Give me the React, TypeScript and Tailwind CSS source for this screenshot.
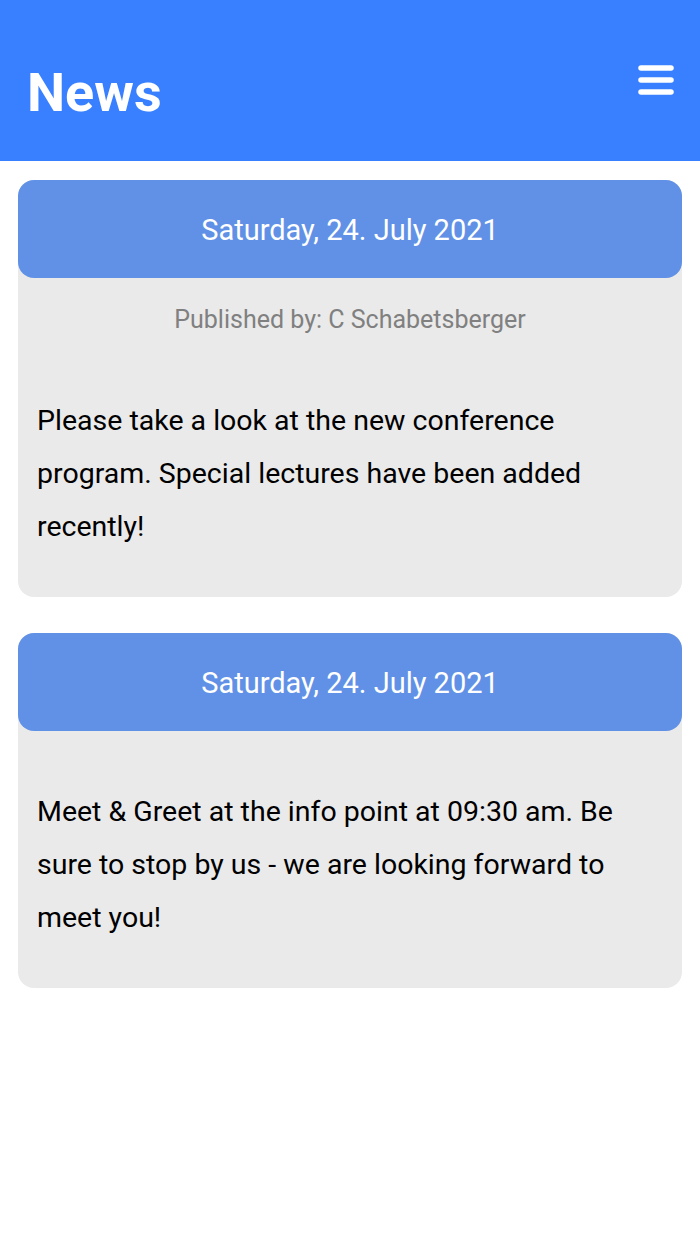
import React from 'react';

type NewsItem = { date: string; author?: string; text: string };

const items: NewsItem[] = [
  {
    date: 'Saturday, 24. July 2021',
    author: 'C Schabetsberger',
    text: 'Please take a look at the new conference program. Special lectures have been added recently!',
  },
  {
    date: 'Saturday, 24. July 2021',
    text: 'Meet & Greet at the info point at 09:30 am. Be sure to stop by us - we are looking forward to meet you!',
  },
];

function MenuIcon() {
  return (
    <svg width="36" height="32" viewBox="0 0 36 32" fill="none">
      <line x1="3" y1="4" x2="33" y2="4" stroke="white" strokeWidth="5.5" strokeLinecap="round" />
      <line x1="3" y1="16" x2="33" y2="16" stroke="white" strokeWidth="5.5" strokeLinecap="round" />
      <line x1="3" y1="28" x2="33" y2="28" stroke="white" strokeWidth="5.5" strokeLinecap="round" />
    </svg>
  );
}

export default function App() {
  return (
    <div className="min-h-[1244px] bg-white font-['Roboto',sans-serif]">
      <header className="h-[161px] bg-[#3880ff] flex items-start justify-between pl-[27px] pr-[27px]">
        <h1 className="mt-[60px] text-[54px] leading-[66px] font-bold text-white">News</h1>
        <button className="mt-[64px] -mr-[1px]">
          <MenuIcon />
        </button>
      </header>

      <main className="px-[18px] pt-[19px] flex flex-col gap-[36px]">
        {items.map((n, i) => (
          <div key={i} className="bg-[#eaeaea] rounded-[16px]">
            <div className="h-[98px] pt-[3px] bg-[#6191e6] rounded-[16px] flex items-center justify-center">
              <span className="text-white text-[29px]">{n.date}</span>
            </div>
            {n.author && (
              <p className="mt-[24px] text-center text-[25px] leading-[36px] text-[#808080]">
                Published by: {n.author}
              </p>
            )}
            <p
              className={`${n.author ? 'mt-[56px]' : 'mt-[54px]'} pb-[44px] pl-[19px] pr-[42px] text-[28.5px] leading-[53px] text-black`}
            >
              {n.text}
            </p>
          </div>
        ))}
      </main>
    </div>
  );
}
